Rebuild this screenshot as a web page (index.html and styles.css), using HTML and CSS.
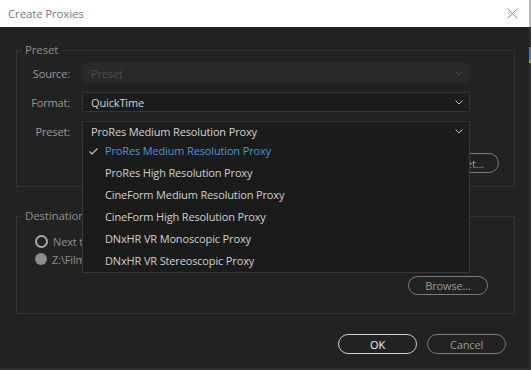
FILE: index.html
```html
<!DOCTYPE html>
<html lang="en">
<head>
    <meta charset="UTF-8">
    <meta name="viewport" content="width=device-width, initial-scale=1.0">
    <title>Create Proxies</title>
    <link rel="stylesheet" href="styles.css">
</head>
<body>
    <div class="screen">
        <div class="dialog">
            <div class="titlebar">
                <span class="title">Create Proxies</span>
                <svg class="close" width="11" height="11" viewBox="0 0 11 11">
                    <path d="M0.5 0.5 L10.5 10.5 M10.5 0.5 L0.5 10.5" stroke="#8c8c8c" stroke-width="1" fill="none"/>
                </svg>
            </div>

            <div class="content">
                <fieldset class="group preset-group">
                    <legend>Preset</legend>

                    <div class="field-row">
                        <label>Source:</label>
                        <div class="select disabled">
                            <span>Preset</span>
                            <svg class="chevron" width="8" height="5" viewBox="0 0 8 5"><path d="M0.5 0.5 L4 4 L7.5 0.5" stroke="#4a4a4a" fill="none"/></svg>
                        </div>
                    </div>

                    <div class="field-row">
                        <label>Format:</label>
                        <div class="select">
                            <span>QuickTime</span>
                            <svg class="chevron" width="8" height="5" viewBox="0 0 8 5"><path d="M0.5 0.5 L4 4 L7.5 0.5" stroke="#bdbdbd" fill="none"/></svg>
                        </div>
                    </div>

                    <div class="field-row">
                        <label>Preset:</label>
                        <div class="select-wrap">
                            <div class="select">
                                <span>ProRes Medium Resolution Proxy</span>
                                <svg class="chevron" width="8" height="5" viewBox="0 0 8 5"><path d="M0.5 0.5 L4 4 L7.5 0.5" stroke="#bdbdbd" fill="none"/></svg>
                            </div>
                            <ul class="dropdown">
                                <li class="selected">
                                    <svg class="check" width="9" height="7" viewBox="0 0 9 7"><path d="M0.5 3.5 L3 6 L8.5 0.5" stroke="#c4c4c4" stroke-width="1.2" fill="none"/></svg>
                                    ProRes Medium Resolution Proxy
                                </li>
                                <li>ProRes High Resolution Proxy</li>
                                <li>CineForm Medium Resolution Proxy</li>
                                <li>CineForm High Resolution Proxy</li>
                                <li>DNxHR VR Monoscopic Proxy</li>
                                <li>DNxHR VR Stereoscopic Proxy</li>
                            </ul>
                        </div>
                    </div>

                    <div class="button-row">
                        <button class="pill">Import Preset...</button>
                    </div>
                </fieldset>

                <fieldset class="group dest-group">
                    <legend>Destination</legend>

                    <div class="radio-row">
                        <span class="radio"></span>
                        <span>Next to Original Media, in a Proxies folder</span>
                    </div>
                    <div class="radio-row">
                        <span class="radio checked"></span>
                        <span>Z:\Film\Proxies</span>
                    </div>

                    <div class="button-row">
                        <button class="pill browse">Browse...</button>
                    </div>
                </fieldset>

                <div class="footer">
                    <button class="pill primary">OK</button>
                    <button class="pill">Cancel</button>
                </div>
            </div>
        </div>
        <div class="side-strip"></div>
    </div>
</body>
</html>
```

FILE: styles.css
```css
body {
    margin: 0;
    background-color: #1e1e1e;
    font-family: "Open Sans", "Noto Sans", Arial, sans-serif;
    font-size: 11px;
    letter-spacing: -0.15px;
}

.screen {
    display: flex;
    width: 531px;
    height: 370px;
}

.dialog {
    width: 529px;
    height: 368px;
    background-color: #222;
    border-bottom: 2px solid #2c2c2c;
}

.side-strip {
    width: 2px;
    background: linear-gradient(to bottom, #b8b8b8 0, #b8b8b8 27px, #2e2e2e 27px, #2e2e2e 47px, #3f7fc4 47px, #3f7fc4 60px, #8fa43a 60px, #8fa43a 63px, #2e2e2e 63px);
}

/* title bar */
.titlebar {
    height: 27px;
    background-color: #fff;
    display: flex;
    align-items: center;
    justify-content: space-between;
    padding: 0 11px 0 8px;
    box-sizing: border-box;
}

.title {
    color: #7d7d7d;
    font-size: 11.5px;
}

.close {
    margin-top: -1px;
}

.content {
    padding: 15px 14px 0 16px;
}

/* groups */
.group {
    margin: 0;
    padding: 5px 15px 13px 0;
    border: 1px solid #353535;
    min-width: 0;
}

.group legend {
    margin-left: 4px;
    padding: 0 4px;
    line-height: 16px;
    color: #8e8e8e;
    font-size: 11.5px;
}

.dest-group {
    margin-top: 21px;
    padding-top: 8px;
    padding-bottom: 18px;
}

.field-row {
    display: grid;
    grid-template-columns: 53px 388px;
    column-gap: 12px;
    align-items: center;
    margin-bottom: 9px;
}

.field-row:last-of-type {
    margin-bottom: 0;
}

.field-row label {
    text-align: right;
    color: #999;
}

.select {
    height: 20px;
    box-sizing: border-box;
    display: flex;
    align-items: center;
    justify-content: space-between;
    padding: 0 6px 0 8px;
    background-color: #1c1c1c;
    border: 1px solid #343434;
    border-radius: 2px;
    color: #d2d2d2;
}

.select.disabled {
    background-color: #292929;
    border-color: #292929;
    color: #505050;
}

.select-wrap {
    position: relative;
}

/* open list */
.dropdown {
    position: absolute;
    top: calc(100% - 1px);
    left: 0;
    width: 388px;
    box-sizing: border-box;
    margin: 0;
    padding: 0;
    list-style: none;
    background-color: #1b1b1b;
    border: 1px solid #383838;
    border-top: none;
    z-index: 2;
}

.dropdown li {
    position: relative;
    height: 22px;
    line-height: 22px;
    padding-left: 22px;
    color: #d0d0d0;
}

.dropdown li.selected {
    color: #4b93dd;
}

.check {
    position: absolute;
    left: 6px;
    top: 8px;
}

/* buttons */
.button-row {
    display: flex;
    justify-content: flex-end;
    margin-top: 12px;
}

.pill {
    height: 20px;
    padding: 0 14px;
    background: transparent;
    border: 1px solid #7a7a7a;
    border-radius: 10px;
    color: #9a9a9a;
    font-family: inherit;
    font-size: 11px;
    letter-spacing: inherit;
    line-height: 17px;
}

.browse {
    width: 80px;
    height: 19px;
    margin-right: 11px;
}

.dest-group .button-row {
    margin-top: 8px;
}

/* radios */
.radio-row {
    display: flex;
    align-items: center;
    gap: 5px;
    height: 18px;
    padding-left: 18px;
    color: #8e8e8e;
}

.radio {
    width: 9px;
    height: 9px;
    border: 2px solid #a9a9a9;
    border-radius: 50%;
}

.radio.checked {
    width: 12px;
    height: 12px;
    border: none;
    background-color: #8c8c8c;
}

.footer {
    display: flex;
    justify-content: flex-end;
    gap: 10px;
    margin-top: 20px;
    padding-right: 9px;
}

.footer .pill {
    width: 79px;
}

.pill.primary {
    border-color: #d0d0d0;
    color: #f0f0f0;
}
```
